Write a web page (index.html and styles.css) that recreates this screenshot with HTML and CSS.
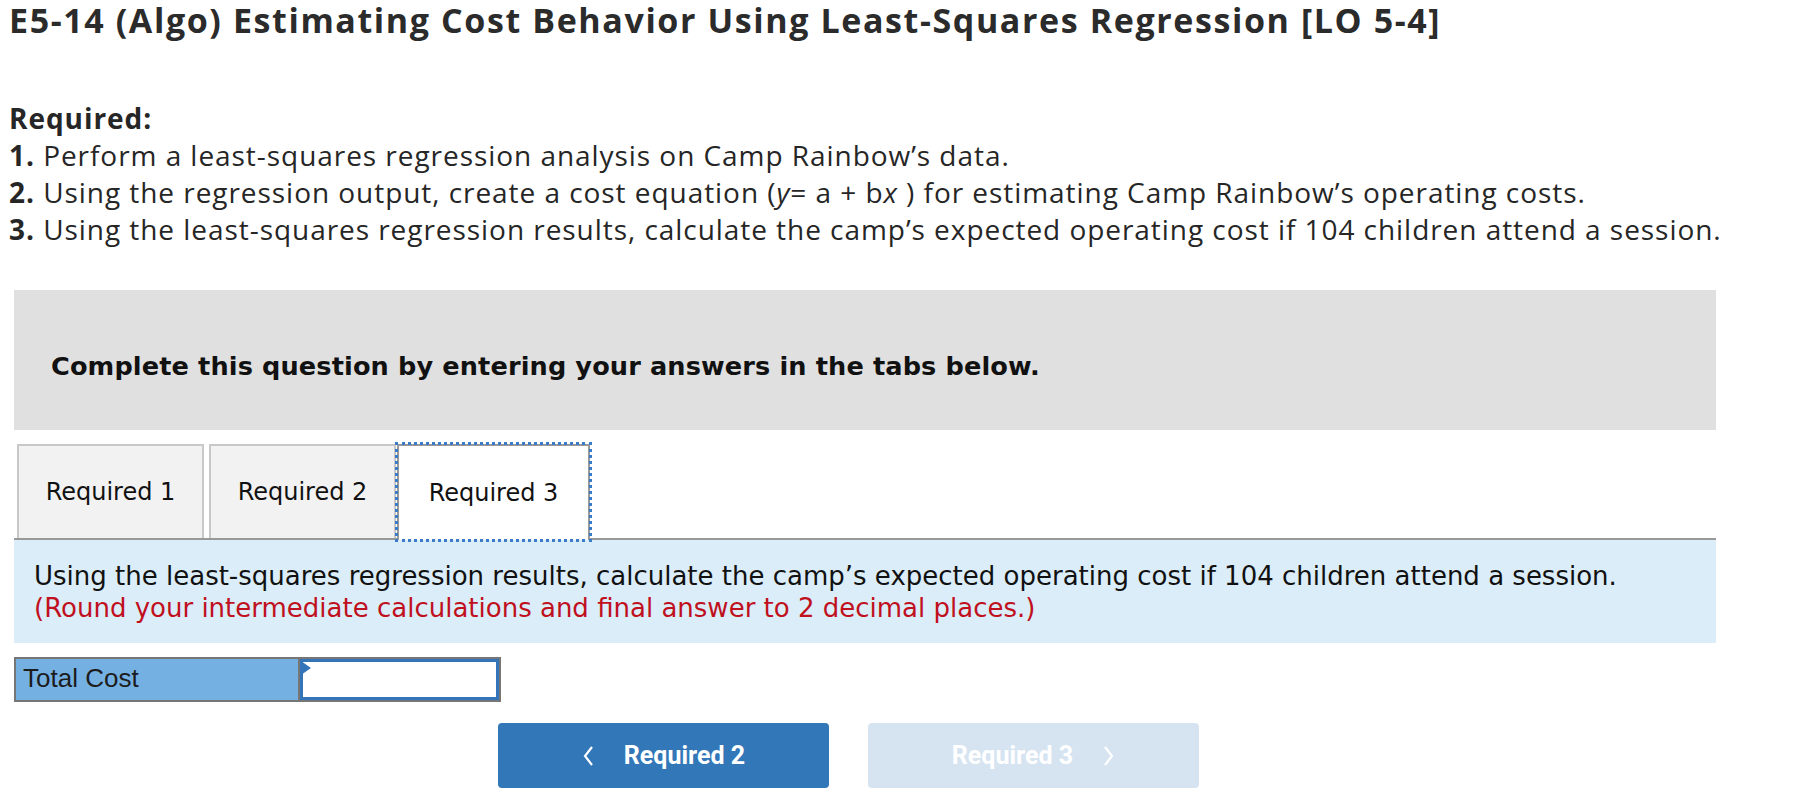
FILE: index.html
```html
<!DOCTYPE html>
<html>
<head>
<meta charset="utf-8">
<link rel="stylesheet" href="styles.css">
</head>
<body>
<div class="page">
  <h1 class="title">E5-14 (Algo) Estimating Cost Behavior Using Least-Squares Regression [LO 5-4]</h1>
  <div class="required">
    <div class="req-head">Required:</div>
    <div class="req-line"><b>1.</b> Perform a least-squares regression analysis on Camp Rainbow’s data.</div>
    <div class="req-line"><b>2.</b> Using the regression output, create a cost equation (<i>y</i>= a + b<i>x</i> ) for estimating Camp Rainbow’s operating costs.</div>
    <div class="req-line"><b>3.</b> Using the least-squares regression results, calculate the camp’s expected operating cost if 104 children attend a session.</div>
  </div>
  <div class="frame">
    <div class="instructions">Complete this question by entering your answers in the tabs below.</div>
    <div class="tabs">
      <div class="tab">Required 1</div>
      <div class="tab">Required 2</div>
      <div class="tab active">Required 3</div>
    </div>
    <div class="panel">
      <div class="panel-line">Using the least-squares regression results, calculate the camp’s expected operating cost if 104 children attend a session.</div>
      <div class="panel-line red">(Round your intermediate calculations and final answer to 2 decimal places.)</div>
    </div>
    <div class="answer">
      <div class="answer-label">Total Cost</div>
      <div class="answer-input"><span class="marker"></span></div>
    </div>
    <div class="nav">
      <div class="btn btn-prev">
        <svg class="chev" width="12" height="22" viewBox="0 0 12 22"><path d="M10 2 L3 11 L10 20" fill="none" stroke="#fff" stroke-width="2.2"/></svg>
        <span>Required 2</span>
      </div>
      <div class="btn btn-next">
        <span>Required 3</span>
        <svg class="chev" width="12" height="22" viewBox="0 0 12 22"><path d="M2 2 L9 11 L2 20" fill="none" stroke="#fff" stroke-width="2.2"/></svg>
      </div>
    </div>
  </div>
</div>
</body>
</html>
```
FILE: styles.css
```css
html, body { margin: 0; padding: 0; background: #fff; }
.page { padding-left: 9px; }
.title {
  margin: 0;
  font-family: "Open Sans", "Lato", sans-serif;
  font-weight: 700;
  font-size: 34px;
  letter-spacing: 1.6px;
  line-height: 40px;
  color: #2b2b2b;
  white-space: nowrap;
}
.required {
  margin-top: 60px;
  font-family: "Open Sans", "Lato", sans-serif;
  font-size: 28px;
  letter-spacing: 0.95px;
  line-height: 37px;
  color: #262626;
}
.req-head { font-weight: 700; }
.req-line { white-space: nowrap; }
.req-line b { font-weight: 700; }
.frame { margin-left: 5px; width: 1702px; }
.instructions {
  margin-top: 42px;
  height: 140px;
  box-sizing: border-box;
  padding: 60px 0 0 37px;
  background: #e0e0e0;
  font-family: "DejaVu Sans", Verdana, sans-serif;
  font-weight: 700;
  font-size: 25.6px;
  letter-spacing: 0.12px;
  line-height: 32px;
  color: #111;
}
.tabs {
  display: flex;
  margin-top: 14px;
  padding-left: 3px;
  height: 94px;
  border-bottom: 2px solid #999;
}
.tab {
  width: 187px;
  box-sizing: border-box;
  margin-right: 5px;
  border: 2px solid #c8c8c8;
  border-bottom: none;
  background: #f2f2f2;
  display: flex;
  align-items: center;
  justify-content: center;
  font-family: "DejaVu Sans", Verdana, sans-serif;
  font-size: 24px;
  color: #111;
}
.tab:nth-child(2) { margin-right: 1px; }
.tab.active {
  width: 193px;
  background: #fff;
  border: 2px solid #999;
  border-bottom: none;
  outline: 3px dotted #3a7bc8;
  outline-offset: -1px;
  margin-bottom: -2px;
}
.panel {
  background: #dbedf8;
  padding: 20px 20px 19px;
  font-family: "DejaVu Sans", Verdana, sans-serif;
  font-size: 26px;
  line-height: 32px;
  color: #111;
}
.panel-line { white-space: nowrap; }
.red { color: #c0101e; }
.answer {
  margin-top: 14px;
  display: flex;
  width: 487px;
  height: 45px;
  box-sizing: border-box;
  border: 2px solid #767676;
}
.answer-label {
  width: 284px;
  box-sizing: border-box;
  border-right: 2px solid #767676;
  background: #74b0e2;
  padding-left: 7px;
  font-family: "Liberation Sans", Arial, sans-serif;
  font-size: 26px;
  line-height: 39px;
  color: #1c1c1c;
}
.answer-input {
  position: relative;
  flex: 1;
  border: 3px solid #3375b8;
  background: #fff;
}
.marker {
  position: absolute;
  left: -2px;
  top: -1px;
  width: 0; height: 0;
  border-top: 7px solid transparent;
  border-bottom: 7px solid transparent;
  border-left: 10px solid #3375b8;
}
.nav {
  margin-top: 21px;
  display: flex;
  gap: 39px;
  padding-left: 484px;
}
.btn {
  width: 331px;
  height: 65px;
  border-radius: 4px;
  display: flex;
  align-items: center;
  justify-content: center;
  gap: 30px;
  font-family: "Roboto", sans-serif;
  font-weight: 700;
  font-size: 25px;
  color: #fff;
}
.btn-prev { background: #3277b8; }
.btn-next { background: #d6e4f2; }
.chev { display: block; }
```
